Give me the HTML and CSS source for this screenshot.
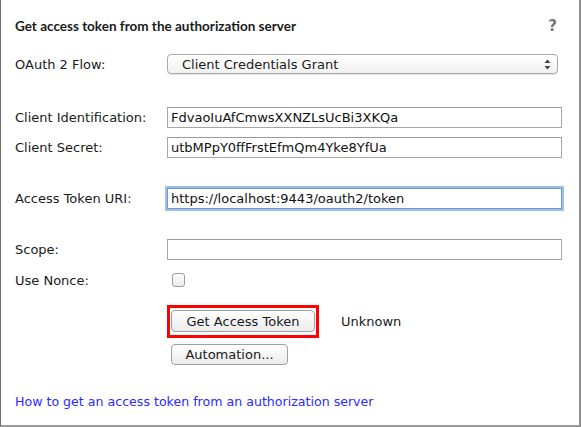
FILE: index.html
```html
<!DOCTYPE html>
<html>
<head>
<meta charset="utf-8">
<link rel="stylesheet" href="styles.css">
</head>
<body>
<div class="dialog">
  <div class="header">
    <h1 class="title">Get access token from the authorization server</h1>
    <span class="help">?</span>
  </div>
  <div class="row row-flow">
    <label class="label">OAuth 2 Flow:</label>
    <div class="select">
      <span>Client Credentials Grant</span>
      <svg class="arrows" width="7" height="11" viewBox="0 0 7 11"><path d="M3.5 0.5 L6.5 4 L0.5 4 Z" fill="#444"/><path d="M3.5 10.5 L6.5 7 L0.5 7 Z" fill="#444"/></svg>
    </div>
  </div>
  <div class="row row-id">
    <label class="label">Client Identification:</label>
    <div class="input">FdvaoIuAfCmwsXXNZLsUcBi3XKQa</div>
  </div>
  <div class="row row-secret">
    <label class="label">Client Secret:</label>
    <div class="input">utbMPpY0ffFrstEfmQm4Yke8YfUa</div>
  </div>
  <div class="row row-uri">
    <label class="label">Access Token URI:</label>
    <div class="input focused">https://localhost:9443/oauth2/token</div>
  </div>
  <div class="row row-scope">
    <label class="label">Scope:</label>
    <div class="input"></div>
  </div>
  <div class="row row-nonce">
    <label class="label">Use Nonce:</label>
    <span class="checkbox"></span>
  </div>
  <div class="row row-get">
    <span class="label"></span>
    <div class="highlight"><button class="btn btn-get">Get Access Token</button></div>
    <span class="status">Unknown</span>
  </div>
  <div class="row row-auto">
    <span class="label"></span>
    <button class="btn btn-auto">Automation...</button>
  </div>
  <a class="link" href="#">How to get an access token from an authorization server</a>
</div>
</body>
</html>
```
FILE: styles.css
```css
html, body {
  margin: 0;
  padding: 0;
  background: #ffffff;
}
body {
  font-family: "DejaVu Sans", sans-serif;
  font-size: 13px;
  color: #1a1a1a;
}
.dialog {
  box-sizing: border-box;
  width: 581px;
  height: 427px;
  background: #ffffff;
  border-left: 1px solid #6e6e6e;
  border-right: 2px solid #8e8e8e;
  border-bottom: 2px solid #9a9a9a;
  padding: 0 17px 0 14px;
  display: flex;
  flex-direction: column;
}
.header {
  height: 52px;
  display: flex;
  align-items: center;
  justify-content: space-between;
}
.title {
  margin: 0;
  font-family: Lato, "DejaVu Sans", sans-serif;
  font-size: 13.5px;
  font-weight: bold;
  color: #1a1a1a;
}
.help {
  font-weight: bold;
  font-size: 15px;
  color: #777;
  margin-right: 5px;
}
.row {
  display: flex;
  align-items: center;
}
.label {
  width: 152px;
  flex: none;
}
.row-flow { margin-top: 2px; height: 20px; }
.row-id { margin-top: 33px; }
.row-secret { margin-top: 9px; }
.row-uri { margin-top: 30px; }
.row-scope { margin-top: 30px; }
.row-nonce { margin-top: 10px; height: 20px; }
.row-get { margin-top: 15px; }
.row-auto { margin-top: 6px; }
.select {
  box-sizing: border-box;
  flex: 1;
  margin-right: 4px;
  height: 20px;
  border: 1px solid #a8a8a8;
  border-radius: 4px;
  background: linear-gradient(#ffffff, #f1f1f1);
  display: flex;
  align-items: center;
  justify-content: space-between;
  padding: 0 6px 0 14px;
  box-shadow: 0 1px 0 #e4e4e4;
}
.arrows { display: block; }
.input {
  box-sizing: border-box;
  flex: 1;
  height: 21px;
  border: 1px solid #a6a6a6;
  border-top-color: #9a9a9a;
  padding: 0 3px;
  line-height: 19px;
  white-space: nowrap;
  color: #111;
}
.input.focused {
  border-color: #6f9ad0;
  box-shadow: 0 0 0 2px #9ec0e8;
}
.checkbox {
  box-sizing: border-box;
  width: 13px;
  height: 14px;
  margin-left: 5px;
  border: 1px solid #9a9a9a;
  border-radius: 3px;
  background: linear-gradient(#ffffff, #ececec);
}
.highlight {
  border: 3px solid #ff0000;
  padding: 2px 1px 3px 1px;
  display: flex;
}
.btn {
  box-sizing: border-box;
  font-family: "DejaVu Sans", sans-serif;
  font-size: 13px;
  color: #1a1a1a;
  border: 1px solid #a0a0a0;
  border-radius: 4px;
  background: linear-gradient(#ffffff, #ececec);
  padding: 0;
  margin: 0;
}
.btn-get { width: 144px; height: 22px; }
.btn-auto { width: 117px; height: 21px; margin-left: 4px; }
.status { margin-left: 22px; }
.link {
  margin-top: 29px;
  font-size: 12.6px;
  color: #2b2bff;
  text-decoration: none;
  align-self: flex-start;
}
```
